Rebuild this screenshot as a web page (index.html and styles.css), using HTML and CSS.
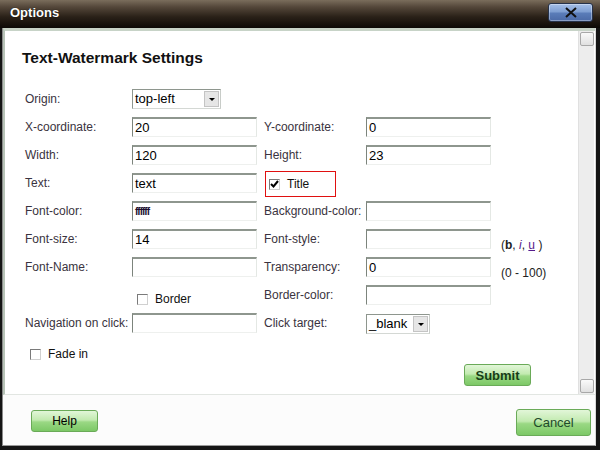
FILE: index.html
```html
<!DOCTYPE html>
<html>
<head>
<meta charset="utf-8">
<link rel="stylesheet" href="styles.css">
</head>
<body>
<div class="window">
  <div class="titlebar">
    <span class="title">Options</span>
    <button class="close"><svg width="14" height="11" viewBox="0 0 14 11"><path d="M2 1 L12 10 M12 1 L2 10" stroke="#111" stroke-width="2"/></svg></button>
  </div>
  <div class="body">
    <div class="panel">
      <div class="content">
        <h1 class="heading">Text-Watermark Settings</h1>
        <div class="form">
          <div class="label">Origin:</div>
          <div class="cell"><div class="select sel-origin"><span class="sel-text">top-left</span><span class="sel-btn"></span></div></div>
          <div class="label"></div><div class="cell"></div><div class="note"></div>

          <div class="label">X-coordinate:</div>
          <div class="cell"><div class="input">20</div></div>
          <div class="label">Y-coordinate:</div>
          <div class="cell"><div class="input">0</div></div>
          <div class="note"></div>

          <div class="label">Width:</div>
          <div class="cell"><div class="input">120</div></div>
          <div class="label">Height:</div>
          <div class="cell"><div class="input">23</div></div>
          <div class="note"></div>

          <div class="label">Text:</div>
          <div class="cell"><div class="input">text</div></div>
          <div class="label"><div class="titlebox"><span class="check checked"><svg width="9" height="8" viewBox="0 0 9 8"><path d="M1 4 L3.5 6.5 L8 1" fill="none" stroke="#000" stroke-width="2"/></svg></span><span class="check-label">Title</span></div></div>
          <div class="cell"></div>
          <div class="note"></div>

          <div class="label">Font-color:</div>
          <div class="cell"><div class="input small">ffffff</div></div>
          <div class="label">Background-color:</div>
          <div class="cell"><div class="input"></div></div>
          <div class="note"></div>

          <div class="label">Font-size:</div>
          <div class="cell"><div class="input">14</div></div>
          <div class="label">Font-style:</div>
          <div class="cell"><div class="input"></div></div>
          <div class="note">(<b>b</b>, <i class="link">i</i>, <u class="link">u</u> )</div>

          <div class="label">Font-Name:</div>
          <div class="cell"><div class="input"></div></div>
          <div class="label">Transparency:</div>
          <div class="cell"><div class="input">0</div></div>
          <div class="note">(0 - 100)</div>

          <div class="label"></div>
          <div class="cell"><div class="checkrow border-check"><span class="check"></span><span class="check-label">Border</span></div></div>
          <div class="label">Border-color:</div>
          <div class="cell"><div class="input"></div></div>
          <div class="note"></div>

          <div class="label">Navigation on click:</div>
          <div class="cell"><div class="input"></div></div>
          <div class="label">Click target:</div>
          <div class="cell"><div class="select sel-target"><span class="sel-text">_blank</span><span class="sel-btn"></span></div></div>
          <div class="note"></div>
        </div>
        <div class="checkrow fade"><span class="check"></span><span class="check-label">Fade in</span></div>
        <div class="submit-row"><button class="btn submit">Submit</button></div>
      </div>
      <div class="scrollbar"><div class="sb-thumb"></div><div class="sb-thumb"></div></div>
    </div>
    <div class="footer">
      <button class="btn help">Help</button>
      <button class="btn cancel">Cancel</button>
    </div>
  </div>
</div>
</body>
</html>
```
FILE: styles.css
```css
html, body { margin: 0; padding: 0; background: #000; }
.window {
  width: 600px; height: 450px; box-sizing: border-box;
  background: #151515;
  display: flex; flex-direction: column;
  font-family: "Liberation Sans", Arial, sans-serif;
  overflow: hidden;
}
.titlebar {
  height: 28px; flex: none;
  background: linear-gradient(#7a6d5c 0%, #54473a 25%, #2a2118 60%, #0c0906 100%);
  display: flex; align-items: flex-start; justify-content: space-between;
  padding: 0 7px 0 10px;
}
.title {
  color: #fff; font-weight: bold; font-size: 13px; margin-top: 5px;
  text-shadow: 0 0 1px #000;
}
.close {
  margin-top: 3px; width: 45px; height: 19px; padding: 0;
  border: 1px solid #26324a; border-radius: 3px;
  background: linear-gradient(#a6c0e8 0%, #7f9fd2 45%, #5a7cb8 55%, #4b6aa6 100%);
  box-shadow: inset 0 0 0 1px rgba(255,255,255,0.35);
  display: flex; align-items: center; justify-content: center;
}
.body {
  flex: 1; display: flex; flex-direction: column;
  margin: 0 4px 4px 2px;
  border-left: 1px solid #8a8a8a;
  border-right: 1px solid #d8d8d8;
  border-bottom: 1px solid #9a9a9a;
  background: #fcfcfc;
}
.panel {
  height: 367px; flex: none; display: flex;
  border-top: 3px solid #c7d3c7;
  border-left: 2px solid #b8c4b8;
  border-bottom: 1px solid #e2e6e2;
  background: #fff;
  box-sizing: border-box;
}
.content { flex: 1; padding-left: 17px; }
.heading {
  margin: 17px 0 0 0; font-size: 15.5px; line-height: 20px; font-weight: bold; color: #111;
}
.form {
  margin-top: 21px; padding-left: 3px;
  display: grid;
  grid-template-columns: 107px 132px 102px 130px auto;
  grid-auto-rows: 28px;
  font-size: 12px; color: #3a3340;
}
.label { line-height: 20px; white-space: nowrap; }
.cell { position: relative; }
.input {
  width: 125px; height: 20px; box-sizing: border-box;
  border-style: solid; border-width: 2px 1px 1px 1px;
  border-color: #8e968e #e4e8e4 #eef0ee #7c847c;
  background: #fff; font-size: 13px; line-height: 17px; color: #000;
  padding-left: 2px;
}
.input.small { font-size: 10px; letter-spacing: -1px; font-weight: bold; color: #201030; }
.select {
  height: 20px; box-sizing: border-box;
  border-style: solid; border-width: 1px;
  border-color: #8e968e #c8ccc8 #d4d8d4 #8e968e;
  display: flex; align-items: center; justify-content: space-between;
  background: #fff; font-size: 13px; color: #000;
}
.sel-origin { width: 89px; margin-top: 0; }
.sel-target { width: 64px; margin-top: 1px; }
.sel-text { padding-left: 2px; line-height: 18px; }
.sel-btn {
  width: 15px; height: 16px; margin-right: 1px; box-sizing: border-box;
  background: #e6e6e6; border: 1px solid #c4c4c4;
  position: relative;
}
.sel-btn::after {
  content: ""; position: absolute; left: 4px; top: 6px;
  border-left: 3px solid transparent; border-right: 3px solid transparent; border-top: 3px solid #000;
}
.note { font-size: 12px; color: #222; line-height: 14px; padding-top: 9px; padding-left: 5px; white-space: nowrap; }
.link { color: #551a8b; }
.titlebox {
  width: 71px; height: 26px; box-sizing: border-box; margin: -2px 0 0 1px;
  border: 1px solid #e01010;
  display: flex; align-items: center; padding-left: 3px;
}
.check {
  width: 11px; height: 11px; box-sizing: border-box; flex: none;
  border-style: solid; border-width: 1px;
  border-color: #7a7a7a #d0d0d0 #d0d0d0 #7a7a7a;
  background: #fff; display: flex; align-items: center; justify-content: center;
}
.check-label { margin-left: 7px; color: #111; font-size: 12px; }
.checkrow { display: flex; align-items: center; }
.border-check { padding-left: 5px; margin-top: 7px; }
.fade { margin-left: 8px; margin-top: 3px; height: 20px; }
.submit-row { display: flex; justify-content: flex-end; padding-right: 47px; margin-top: 0px; }
.btn {
  font-family: "Liberation Sans", Arial, sans-serif;
  border: 1px solid #6aaa58; border-radius: 3px;
  background: linear-gradient(#e2f6d8 0%, #c2eab0 45%, #9ad884 55%, #7cc866 100%);
  padding: 0; cursor: default;
}
.submit { width: 67px; height: 22px; font-weight: bold; font-size: 13px; color: #173d17; }
.scrollbar {
  width: 16px; flex: none; margin-right: 1px;
  background: #ededed; border-left: 1px solid #e0e0e0;
  display: flex; flex-direction: column; justify-content: space-between;
  padding: 1px 0 1px 1px; box-sizing: border-box;
}
.sb-thumb {
  width: 14px; height: 14px; box-sizing: border-box;
  border: 1px solid #a8a8a8; border-radius: 2px;
  background: linear-gradient(#fafafa, #e0e0e0);
}
.footer {
  flex: 1; display: flex; justify-content: space-between; align-items: center;
  padding: 0 4px 0 28px;
}
.help { width: 67px; height: 22px; font-size: 12px; color: #000; margin-top: 2px; }
.cancel { width: 75px; height: 27px; font-size: 13px; color: #1f4a2a; margin-top: 4px; }
```
